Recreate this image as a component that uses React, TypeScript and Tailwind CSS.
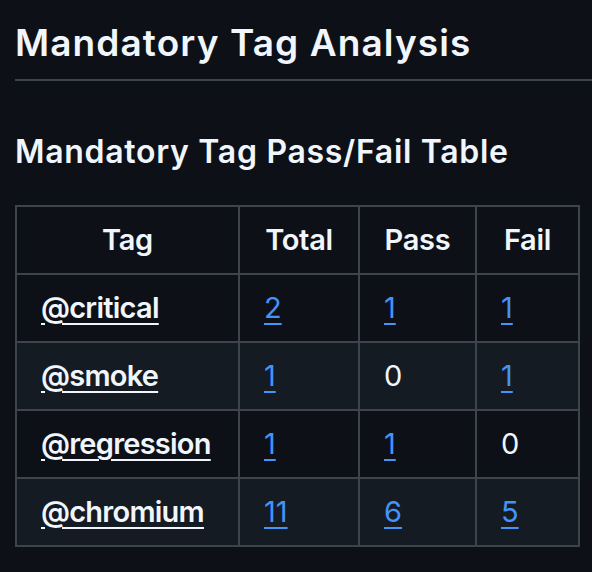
import React from "react";

const rows = [
  { tag: "@critical", total: "2", pass: "1", fail: "1", alt: false, passLink: true, failLink: true },
  { tag: "@smoke", total: "1", pass: "0", fail: "1", alt: true, passLink: false, failLink: true },
  { tag: "@regression", total: "1", pass: "1", fail: "0", alt: false, passLink: true, failLink: false },
  { tag: "@chromium", total: "11", pass: "6", fail: "5", alt: true, passLink: true, failLink: true },
];

function Num({ v, link }: { v: string; link: boolean }) {
  return link ? (
    <a href="#" className="text-[#4493f8] underline decoration-[2px] underline-offset-[5px]">
      {v}
    </a>
  ) : (
    <span className="text-[#f0f6fc]">{v}</span>
  );
}

export default function App() {
  return (
    <div
      className="min-h-[572px] w-[592px] overflow-hidden bg-[#0d1117] pl-[15px] text-[#f0f6fc]"
      style={{ fontFamily: "Inter, 'Noto Sans', sans-serif" }}
    >
      <h1 className="pt-[20px] pb-[13px] border-b-2 border-[#3d444d] text-[37px] tracking-[1.1px] font-semibold leading-[1.25]">
        Mandatory Tag Analysis
      </h1>
      <h2 className="mt-[51px] text-[32px] tracking-[0.7px] font-semibold leading-[1.25]">
        Mandatory Tag Pass/Fail Table
      </h2>
      <table className="mt-[33px] table-fixed border-collapse w-[563px] text-[29px] leading-[1.5]">
        <colgroup>
          <col className="w-[223px]" />
          <col className="w-[120px]" />
          <col className="w-[117px]" />
          <col className="w-[103px]" />
        </colgroup>
        <thead>
          <tr className="bg-[#0d1117]">
            {["Tag", "Total", "Pass", "Fail"].map((h) => (
              <th
                key={h}
                className="border-2 border-[#3d444d] px-[24px] py-[11px] text-center font-semibold tracking-[-0.3px]"
              >
                {h}
              </th>
            ))}
          </tr>
        </thead>
        <tbody>
          {rows.map((r) => (
            <tr key={r.tag} className={r.alt ? "bg-[#151b23]" : "bg-[#0d1117]"}>
              <td className="h-[68px] border-2 border-[#3d444d] px-[24px] py-[11px] font-semibold tracking-[-0.75px]">
                <a href="#" className="text-[#f0f6fc] underline decoration-[2px] underline-offset-[5px]">
                  {r.tag}
                </a>
              </td>
              <td className="border-2 border-[#3d444d] px-[24px] py-[11px]">
                <Num v={r.total} link={true} />
              </td>
              <td className="border-2 border-[#3d444d] px-[24px] py-[11px]">
                <Num v={r.pass} link={r.passLink} />
              </td>
              <td className="border-2 border-[#3d444d] px-[24px] py-[11px]">
                <Num v={r.fail} link={r.failLink} />
              </td>
            </tr>
          ))}
        </tbody>
      </table>
    </div>
  );
}
